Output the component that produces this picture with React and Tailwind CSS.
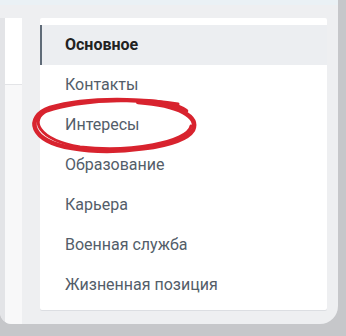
import React from "react";

const items = [
  "Основное",
  "Контакты",
  "Интересы",
  "Образование",
  "Карьера",
  "Военная служба",
  "Жизненная позиция",
];

const MenuItem = ({ label, active }) => (
  <div
    className={`flex items-center h-[40px] pl-[23px] border-l-2 ${
      active
        ? "bg-[#eceef1] border-[#5f6b78] font-bold text-[#222]"
        : "border-transparent text-[#535d69]"
    }`}
  >
    {label}
  </div>
);

export default function App() {
  return (
    <div
      className="relative w-[346px] h-[336px] overflow-hidden bg-[#c6c7ca]"
      style={{ fontFamily: "Roboto, 'Liberation Sans', sans-serif" }}
    >
      <div className="w-[338px] h-[324px] bg-[#eeeff1] rounded-br-[18px] rounded-bl-[12px] flex flex-col overflow-hidden">
        <div className="h-[5px] bg-[#eaf1f5] shrink-0" />
        <div className="flex flex-1 pt-[13px]">
          <div className="w-[5px] bg-[#e3e4e7] shrink-0" />
          <div className="w-[17px] bg-[#f8f8f9] shrink-0 flex flex-col">
            <div className="h-[67px] border-b border-[#e3e4e7] bg-white" />
          </div>
          <div className="w-[18px] shrink-0" />
          <div className="w-[287px] h-[292px] bg-white rounded-[2px] pt-[7px] text-[16px] shadow-[0_1px_0_#dcdee2]">
            {items.map((label, i) => (
              <MenuItem key={label} label={label} active={i === 0} />
            ))}
          </div>
        </div>
      </div>
      <svg
        className="absolute left-0 top-0 pointer-events-none"
        width="346"
        height="336"
        viewBox="0 0 346 336"
      >
        <g fill="none" stroke="#d8232e" strokeLinecap="round">
          <path
            d="M186 111 C 170 98, 90 96, 50 108 C 24 117, 30 142, 72 148 C 112 155, 182 148, 193 130 C 199 117, 180 105, 138 102"
            strokeWidth="4.5"
          />
          <path
            d="M178 104 C 140 97, 80 100, 47 111 C 30 119, 36 139, 80 147 C 130 153, 188 142, 191 126"
            strokeWidth="3"
          />
        </g>
      </svg>
    </div>
  );
}
